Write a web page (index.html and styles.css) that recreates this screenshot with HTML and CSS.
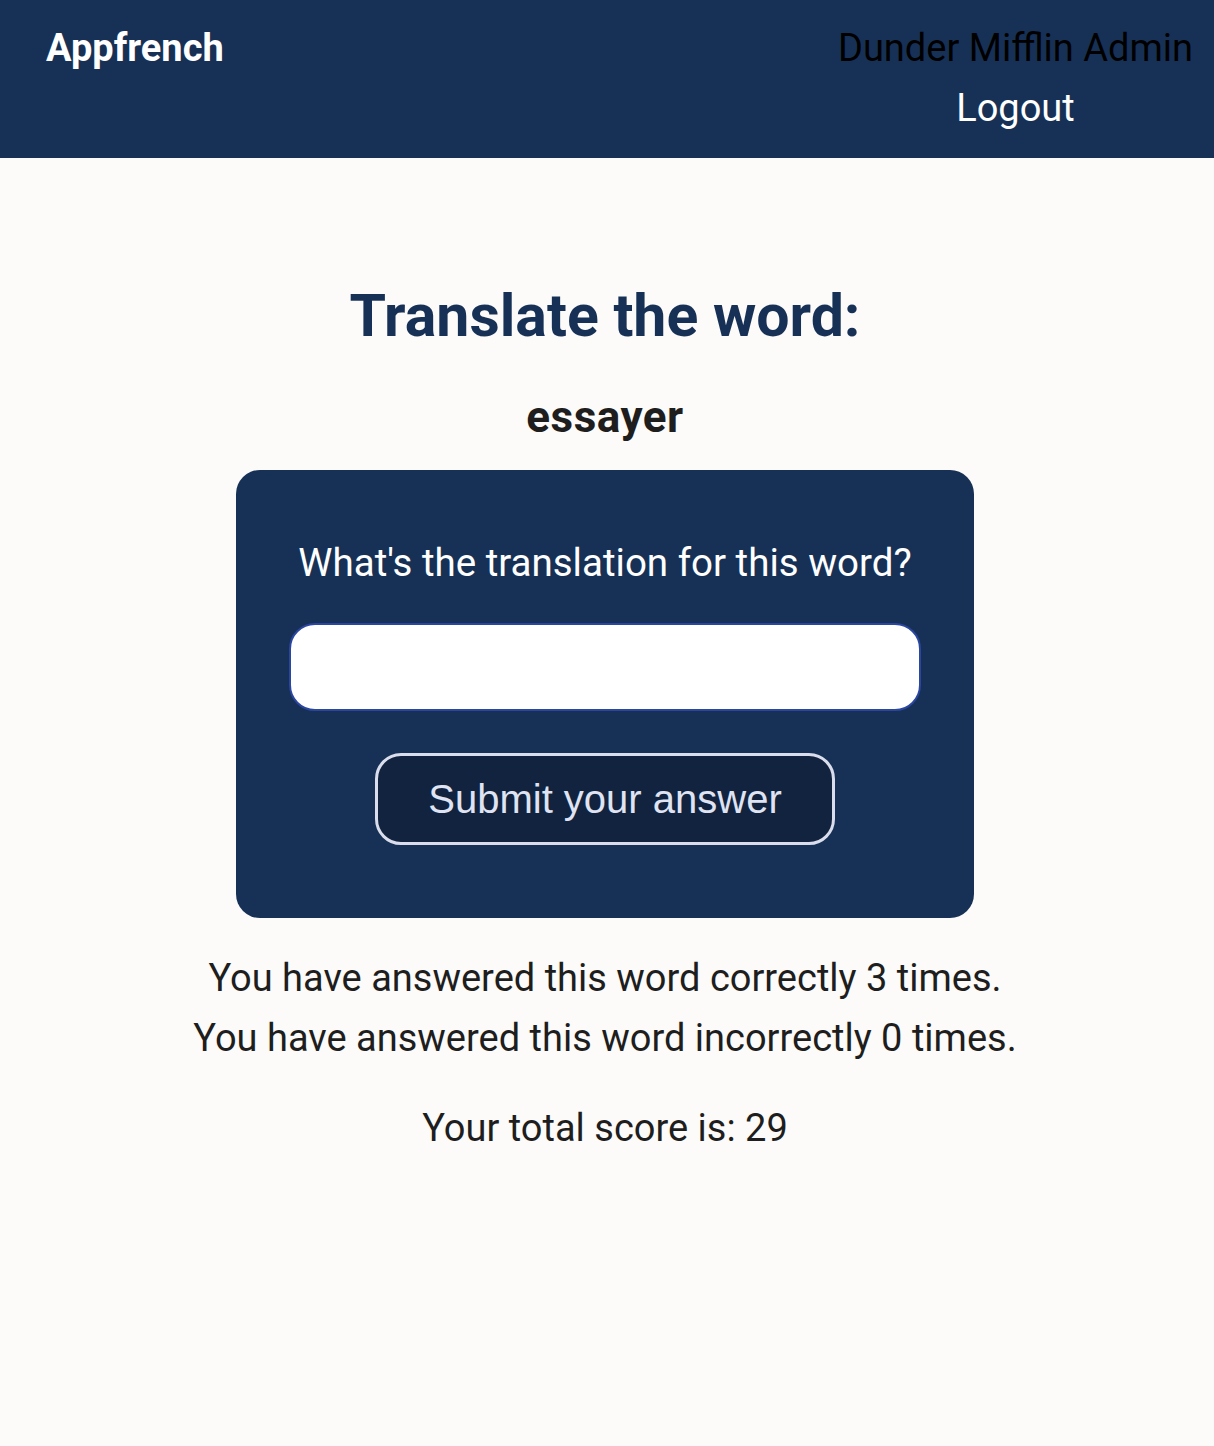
FILE: index.html
```html
<!DOCTYPE html>
<html lang="en">
<head>
<meta charset="utf-8">
<title>Appfrench</title>
<link rel="stylesheet" href="styles.css">
</head>
<body>
<header class="topbar">
  <div class="brand">Appfrench</div>
  <div class="user">
    <span class="user-name">Dunder Mifflin Admin</span>
    <a class="logout" href="#">Logout</a>
  </div>
</header>
<main class="content">
  <h1 class="title">Translate the word:</h1>
  <h2 class="word">essayer</h2>
  <form class="card">
    <label class="card-label" for="answer">What's the translation for this word?</label>
    <input class="answer-input" id="answer" type="text">
    <button class="submit-btn" type="button">Submit your answer</button>
  </form>
  <div class="stats">
    <p class="stat-line">You have answered this word correctly 3 times.</p>
    <p class="stat-line">You have answered this word incorrectly 0 times.</p>
  </div>
  <p class="score">Your total score is: 29</p>
</main>
</body>
</html>
```
FILE: styles.css
```css
* { box-sizing: border-box; }
html, body { margin: 0; padding: 0; }
body {
  background: #fcfbf9;
  font-family: Roboto, "Noto Sans", sans-serif;
  color: #1e1e1e;
  min-height: 1446px;
}
.topbar {
  height: 158px;
  background: #173156;
  display: flex;
  justify-content: space-between;
  align-items: flex-start;
  padding: 18px 21px 0 46px;
}
.brand {
  color: #ffffff;
  font-weight: 700;
  font-size: 38px;
  line-height: 60px;
}
.user {
  display: flex;
  flex-direction: column;
  align-items: center;
  font-size: 38px;
  line-height: 60px;
}
.user-name { color: #000000; }
.logout { color: #ffffff; text-decoration: none; }
.content {
  display: flex;
  flex-direction: column;
  align-items: center;
  padding-top: 118px;
  padding-right: 4px;
}
.title {
  margin: 0;
  color: #173156;
  font-size: 59px;
  font-weight: 700;
  line-height: 80px;
}
.word {
  margin: 33px 0 0;
  font-size: 44px;
  font-weight: 700;
  line-height: 56px;
  letter-spacing: 0.5px;
  color: #1e1e1e;
}
.card {
  margin-top: 25px;
  width: 738px;
  height: 448px;
  background: #173156;
  border-radius: 24px;
  display: flex;
  flex-direction: column;
  align-items: center;
  padding-top: 68px;
}
.card-label {
  color: #ffffff;
  font-size: 38.5px;
  line-height: 50px;
}
.answer-input {
  margin-top: 35px;
  width: 632px;
  height: 88px;
  border: 2px solid #2a46a0;
  border-radius: 26px;
  background: #ffffff;
  outline: none;
}
.submit-btn {
  margin-top: 42px;
  width: 460px;
  height: 92px;
  border: 3px solid #d9ddec;
  border-radius: 26px;
  background: #12233f;
  color: #dfe3f2;
  font-family: "Liberation Sans", Arial, sans-serif;
  font-size: 40px;
}
.stats {
  margin-top: 30px;
  display: flex;
  flex-direction: column;
  align-items: center;
}
.stat-line {
  margin: 0;
  font-size: 38px;
  line-height: 60px;
}
.score {
  margin: 30px 0 0;
  font-size: 38px;
  line-height: 60px;
}
```
